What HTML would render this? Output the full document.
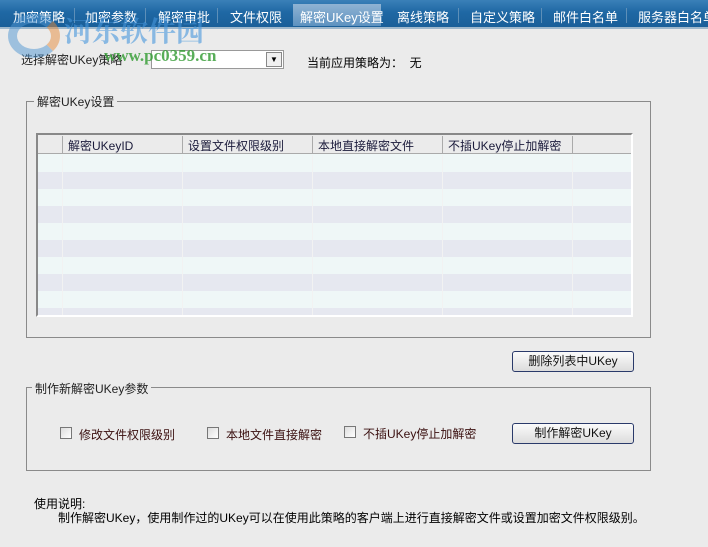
<!DOCTYPE html>
<html><head><meta charset="utf-8"><style>
*{margin:0;padding:0;box-sizing:border-box}
body{width:708px;height:547px;background:#ebebeb;font-family:"Liberation Sans","Noto Sans CJK SC",sans-serif;font-size:12px;color:#000;position:relative;overflow:hidden}
.abs{position:absolute;white-space:nowrap}
.tabbar{position:absolute;left:0;top:0;width:708px;height:29px;background:linear-gradient(#3a80b8,#1f68a4 45%,#1a5f99);border-bottom:2px solid #9fb8cc}
.tab{position:absolute;top:7px;color:#fff;font-size:13px}
.sep{position:absolute;top:8px;width:1px;height:15px;background:#5d8fb8}
.active{position:absolute;left:293px;top:4px;width:88px;height:22px;background:linear-gradient(#8fb3d3,#5d92c0)}
.grp{position:absolute;border:1px solid #8a8a8a}
.legend{position:absolute;background:#ebebeb;padding:0 3px;color:#222}
.btn{position:absolute;border:1px solid #2a3a6a;border-radius:3px;background:linear-gradient(#fbfbfb,#dcdcdc);text-align:center;font-size:12px;line-height:19px;color:#111}
.cb{position:absolute;width:12px;height:12px;border:1px solid #777;background:linear-gradient(135deg,#ddd,#fff)}
.lbl{position:absolute;color:#3a0f0f;font-size:12px}
</style></head><body>
<div class="tabbar"></div>
<div class="active"></div>
<div class="tab abs" style="left:13px">加密策略</div>
<div class="sep" style="left:74px"></div>
<div class="tab abs" style="left:85px">加密参数</div>
<div class="sep" style="left:145px"></div>
<div class="tab abs" style="left:158px">解密审批</div>
<div class="sep" style="left:217px"></div>
<div class="tab abs" style="left:230px">文件权限</div>
<div class="tab abs" style="left:300px">解密UKey设置</div>
<div class="tab abs" style="left:397px">离线策略</div>
<div class="sep" style="left:458px"></div>
<div class="tab abs" style="left:470px">自定义策略</div>
<div class="sep" style="left:541px"></div>
<div class="tab abs" style="left:553px">邮件白名单</div>
<div class="sep" style="left:626px"></div>
<div class="tab abs" style="left:638px">服务器白名单</div>

<div class="abs" style="left:21px;top:51px;color:#222">选择解密UKey策略</div>
<div class="abs" style="left:151px;top:50px;width:133px;height:19px;background:#fff;border:1px solid #999"></div>
<div class="abs" style="left:266px;top:52px;width:16px;height:15px;border:1px solid #888;background:#f0f0f0;font-size:8px;text-align:center;line-height:14px">▼</div>
<div class="abs" style="left:307px;top:54px">当前应用策略为：&nbsp;&nbsp;无</div>

<div class="abs" style="left:8px;top:14px;width:52px;height:44px;border-radius:50%;border:9px solid rgba(80,150,210,0.5);border-right-color:rgba(230,140,60,0.5)"></div>
<div class="abs" style="left:64px;top:10px;font-size:28px;font-weight:bold;color:rgba(70,150,220,0.6);font-family:'Noto Serif CJK SC',serif">河东软件园</div>
<div class="abs" style="left:104px;top:46px;font-size:17px;color:rgba(60,160,60,0.85);font-family:'Liberation Serif',serif;font-weight:bold">www.pc0359.cn</div>

<div class="grp" style="left:26px;top:101px;width:625px;height:237px"></div>
<div class="legend abs" style="left:34px;top:93px">解密UKey设置</div>
<div class="abs" style="left:36px;top:133px;width:597px;height:184px;border:2px solid #888;border-right-color:#fff;border-bottom-color:#fff;background:repeating-linear-gradient(#eff7f7 0 17px,#e6e8f0 17px 34px);background-position:0 20px"></div>
<div class="abs" style="left:38px;top:135px;width:593px;height:19px;background:#ebebeb;border-bottom:1px solid #aaa"></div>
<div class="sep" style="left:62px;top:136px;background:#aaa;height:18px"></div>
<div class="sep" style="left:182px;top:136px;background:#aaa;height:18px"></div>
<div class="sep" style="left:312px;top:136px;background:#aaa;height:18px"></div>
<div class="sep" style="left:442px;top:136px;background:#aaa;height:18px"></div>
<div class="sep" style="left:572px;top:136px;background:#aaa;height:18px"></div>
<div class="abs" style="left:62px;top:155px;width:1px;height:160px;background:#f2f2f2"></div>
<div class="abs" style="left:182px;top:155px;width:1px;height:160px;background:#f2f2f2"></div>
<div class="abs" style="left:312px;top:155px;width:1px;height:160px;background:#f2f2f2"></div>
<div class="abs" style="left:442px;top:155px;width:1px;height:160px;background:#f2f2f2"></div>
<div class="abs" style="left:572px;top:155px;width:1px;height:160px;background:#f2f2f2"></div>
<div class="abs" style="left:68px;top:137px;color:#1a1a3a">解密UKeyID</div>
<div class="abs" style="left:188px;top:137px;color:#1a1a3a">设置文件权限级别</div>
<div class="abs" style="left:318px;top:137px;color:#1a1a3a">本地直接解密文件</div>
<div class="abs" style="left:448px;top:137px;color:#1a1a3a">不插UKey停止加解密</div>

<div class="btn" style="left:512px;top:351px;width:122px;height:21px">删除列表中UKey</div>

<div class="grp" style="left:26px;top:387px;width:625px;height:84px"></div>
<div class="legend abs" style="left:32px;top:380px">制作新解密UKey参数</div>
<div class="cb" style="left:60px;top:427px"></div><div class="lbl" style="left:79px;top:426px">修改文件权限级别</div>
<div class="cb" style="left:207px;top:427px"></div><div class="lbl" style="left:226px;top:426px">本地文件直接解密</div>
<div class="cb" style="left:344px;top:426px"></div><div class="lbl" style="left:363px;top:425px">不插UKey停止加解密</div>
<div class="btn" style="left:512px;top:423px;width:122px;height:21px">制作解密UKey</div>

<div class="abs" style="left:34px;top:495px">使用说明:</div>
<div class="abs" style="left:58px;top:509px">制作解密UKey，使用制作过的UKey可以在使用此策略的客户端上进行直接解密文件或设置加密文件权限级别。</div>
</body></html>
